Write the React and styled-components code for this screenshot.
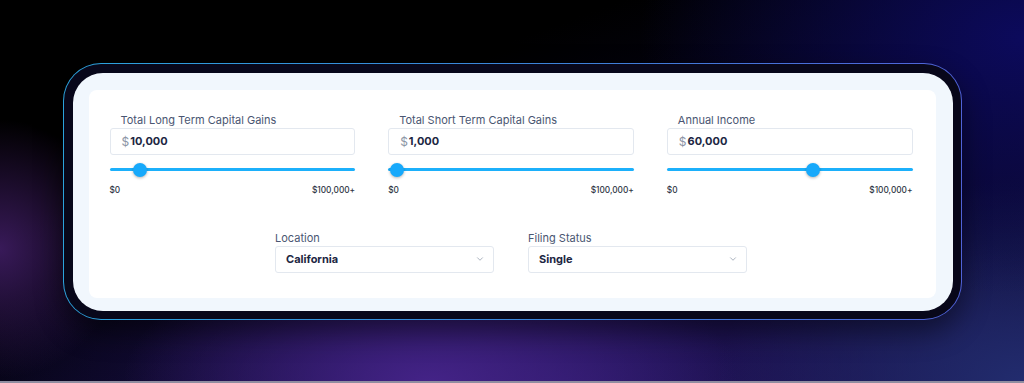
import React from "react";
import styled, { createGlobalStyle } from "styled-components";
import { ChevronDown } from "lucide-react";

const GlobalStyle = createGlobalStyle`
  html, body {
    margin: 0;
    padding: 0;
    background: #030208;
  }
  * {
    box-sizing: border-box;
  }
`;

const gains = [
    { label: "Total Long Term Capital Gains", value: 10000 },
    { label: "Total Short Term Capital Gains", value: 1000 },
    { label: "Annual Income", value: 60000 },
];

const MAX = 100000;

function SliderField({ label, value }) {
    const pct = Math.min(value / MAX, 1);
    return (
        <Field>
            <Label>{label}</Label>
            <MoneyBox>
                <Dollar>$</Dollar>
                <Amount>{value.toLocaleString("en-US")}</Amount>
            </MoneyBox>
            <Slider>
                <Track />
                <Thumb style={{ left: `calc(${pct} * (100% - 14px))` }} />
            </Slider>
            <Range>
                <span>$0</span>
                <span>$100,000+</span>
            </Range>
        </Field>
    );
}

function SelectField({ label, value }) {
    return (
        <SelectWrap>
            <SelectLabel>{label}</SelectLabel>
            <SelectBox>
                <span>{value}</span>
                <ChevronDown size={10} strokeWidth={2} color="#9aa3b2" />
            </SelectBox>
        </SelectWrap>
    );
}

export default function App() {
    return (
        <Page>
            <GlobalStyle />
            <Frame>
                <Surface>
                    <Panel>
                        <SliderGrid>
                            {gains.map(g => <SliderField key={g.label} {...g} />)}
                        </SliderGrid>
                        <SelectRow>
                            <SelectField label="Location" value="California" />
                            <SelectField label="Filing Status" value="Single" />
                        </SelectRow>
                    </Panel>
                </Surface>
            </Frame>
            <BottomLine />
        </Page>
    );
}

const Page = styled.div`
width: 1024px;
height: 383px;
overflow: hidden;
display: flex;
flex-direction: column;
padding: 63px 0 0 63px;
font-family: Inter, "Noto Sans", sans-serif;
background:
    radial-gradient(ellipse 40% 50% at 42% 100%, rgba(70, 36, 138, 0.95), transparent 75%),
    radial-gradient(ellipse 50% 90% at 100% 10%, rgba(12, 10, 92, 1), transparent 75%),
    radial-gradient(ellipse 40% 70% at 100% 100%, rgba(34, 44, 110, 1), transparent 75%),
    radial-gradient(ellipse 16% 45% at 0% 65%, rgba(66, 30, 104, 0.85), transparent 75%),
    radial-gradient(ellipse 70% 60% at 55% 100%, rgba(38, 22, 98, 0.95), transparent 85%),
    linear-gradient(160deg, #000000 30%, #0a0728 70%, #10103f);
`;

const Frame = styled.div`
width: 899px;
height: 257px;
padding: 8.5px;
border: 1.5px solid transparent;
border-radius: 38px;
background:
    linear-gradient(#08071a, #08071a) padding-box,
    linear-gradient(90deg, #2ba3dc, #3f7fd8 60%, #5062d8) border-box;
box-shadow: 0 12px 28px rgba(0, 0, 0, 0.45);
`;

const Surface = styled.div`
height: 100%;
background: #f1f7fd;
border-radius: 30px;
padding: 17px 17px 13px 16px;
`;

const Panel = styled.div`
height: 100%;
background: #ffffff;
border-radius: 8px;
padding: 22px 23px 0 21px;
`;

const SliderGrid = styled.div`
display: grid;
grid-template-columns: repeat(3, 1fr);
column-gap: 33px;
`;

const Field = styled.div`
display: flex;
flex-direction: column;
`;

const Label = styled.div`
font-size: 11px;
line-height: 16px;
color: #4a5672;
padding-left: 11px;
`;

const MoneyBox = styled.div`
height: 27px;
display: flex;
align-items: center;
padding-left: 11px;
border: 1px solid #e3e8ef;
border-radius: 3px;
background: #fff;
`;

const Dollar = styled.span`
font-size: 12px;
color: #8c95a6;
margin-right: 1px;
`;

const Amount = styled.span`
font-size: 11px;
font-weight: 700;
color: #1c2642;
`;

const Slider = styled.div`
position: relative;
height: 14px;
margin-top: 8px;
display: flex;
align-items: center;
`;

const Track = styled.div`
width: 100%;
height: 3px;
border-radius: 2px;
background: #1cb0fb;
`;

const Thumb = styled.div`
position: absolute;
top: 0;
width: 14px;
height: 14px;
border-radius: 50%;
background: #17a9fb;
box-shadow: 0 1px 3px rgba(0, 0, 0, 0.3);
`;

const Range = styled.div`
display: flex;
justify-content: space-between;
margin-top: 7px;
font-size: 8.3px;
line-height: 12px;
font-weight: 500;
color: #2e3544;
`;

const SelectRow = styled.div`
display: flex;
justify-content: center;
gap: 34px;
margin-top: 34px;
`;

const SelectWrap = styled.div`
width: 219px;
display: flex;
flex-direction: column;
`;

const SelectLabel = styled.div`
font-size: 11px;
line-height: 16px;
color: #4a5672;
`;

const SelectBox = styled.div`
height: 27px;
display: flex;
align-items: center;
justify-content: space-between;
padding: 0 8px 0 10px;
border: 1px solid #e3e8ef;
border-radius: 3px;
font-size: 11px;
font-weight: 700;
color: #1c2642;
`;

const BottomLine = styled.div`
margin-top: auto;
margin-left: -63px;
height: 2px;
background: #8f8da0;
`;
